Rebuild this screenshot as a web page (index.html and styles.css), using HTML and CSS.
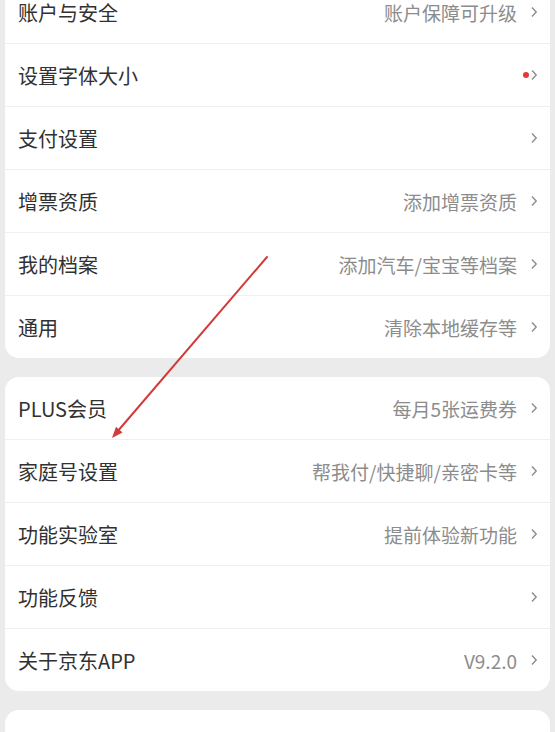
FILE: index.html
```html
<!DOCTYPE html>
<html lang="zh-CN">
<head>
    <meta charset="UTF-8">
    <meta name="viewport" content="width=device-width, initial-scale=1.0">
    <title>设置</title>
    <link rel="stylesheet" href="styles.css">
</head>
<body>
    <div class="page">
        <section class="card">
            <div class="row"><span class="label">账户与安全</span><span class="value">账户保障可升级</span><svg class="chevron" viewBox="0 0 8 12"><path d="M2 1.5 6.2 6 2 10.5"/></svg></div>
            <div class="row"><span class="label">设置字体大小</span><span class="dot"></span><svg class="chevron" viewBox="0 0 8 12"><path d="M2 1.5 6.2 6 2 10.5"/></svg></div>
            <div class="row"><span class="label">支付设置</span><svg class="chevron" viewBox="0 0 8 12"><path d="M2 1.5 6.2 6 2 10.5"/></svg></div>
            <div class="row"><span class="label">增票资质</span><span class="value">添加增票资质</span><svg class="chevron" viewBox="0 0 8 12"><path d="M2 1.5 6.2 6 2 10.5"/></svg></div>
            <div class="row"><span class="label">我的档案</span><span class="value">添加汽车/宝宝等档案</span><svg class="chevron" viewBox="0 0 8 12"><path d="M2 1.5 6.2 6 2 10.5"/></svg></div>
            <div class="row"><span class="label">通用</span><span class="value">清除本地缓存等</span><svg class="chevron" viewBox="0 0 8 12"><path d="M2 1.5 6.2 6 2 10.5"/></svg></div>
        </section>

        <section class="card">
            <div class="row"><span class="label">PLUS会员</span><span class="value">每月5张运费券</span><svg class="chevron" viewBox="0 0 8 12"><path d="M2 1.5 6.2 6 2 10.5"/></svg></div>
            <div class="row"><span class="label">家庭号设置</span><span class="value">帮我付/快捷聊/亲密卡等</span><svg class="chevron" viewBox="0 0 8 12"><path d="M2 1.5 6.2 6 2 10.5"/></svg></div>
            <div class="row"><span class="label">功能实验室</span><span class="value">提前体验新功能</span><svg class="chevron" viewBox="0 0 8 12"><path d="M2 1.5 6.2 6 2 10.5"/></svg></div>
            <div class="row"><span class="label">功能反馈</span><svg class="chevron" viewBox="0 0 8 12"><path d="M2 1.5 6.2 6 2 10.5"/></svg></div>
            <div class="row"><span class="label">关于京东APP</span><span class="value">V9.2.0</span><svg class="chevron" viewBox="0 0 8 12"><path d="M2 1.5 6.2 6 2 10.5"/></svg></div>
        </section>

        <section class="card">
            <div class="row logout">退出登录</div>
        </section>
    </div>

    <!-- red pointer drawn over the list -->
    <svg class="pointer" viewBox="0 0 555 732">
        <line x1="267" y1="257" x2="117" y2="432" stroke="#d33a3a" stroke-width="2" stroke-linecap="round"/>
        <polygon points="112,438 122.5,432.4 116,426.8" fill="#d33a3a"/>
    </svg>
</body>
</html>
```

FILE: styles.css
```css
body {
    margin: 0;
    padding: 0;
    background-color: #ebebeb;
    font-family: "Noto Sans CJK SC", "Noto Sans", sans-serif;
    overflow: hidden;
}

/* list is scrolled a little, first row sits partly above the top */
.page { margin-top: -19px; padding: 0 5px; display: flex; flex-direction: column; gap: 19px; }

.card { background: #fff; border-radius: 14px; overflow: hidden; }

.row { display: flex; align-items: center; height: 62px; padding: 0 12px 0 13px; border-bottom: 1px solid #efefef; }
.row:last-child { border-bottom: none; }

.label { flex: 1; font-size: 20px; color: #313131; }
.value { font-size: 19px; color: #8c8c8c; margin-right: 13px; }

.dot { width: 6px; height: 6px; border-radius: 50%; background: #e5383b; margin-right: 1px; }

.chevron { width: 8px; height: 12px; fill: none; stroke: #8c8c8c; stroke-width: 1.4; }

.logout { justify-content: center; font-size: 20px; color: #333; padding-top: 30px; }

.pointer { position: absolute; left: 0; top: 0; width: 555px; height: 732px; pointer-events: none; }
```
